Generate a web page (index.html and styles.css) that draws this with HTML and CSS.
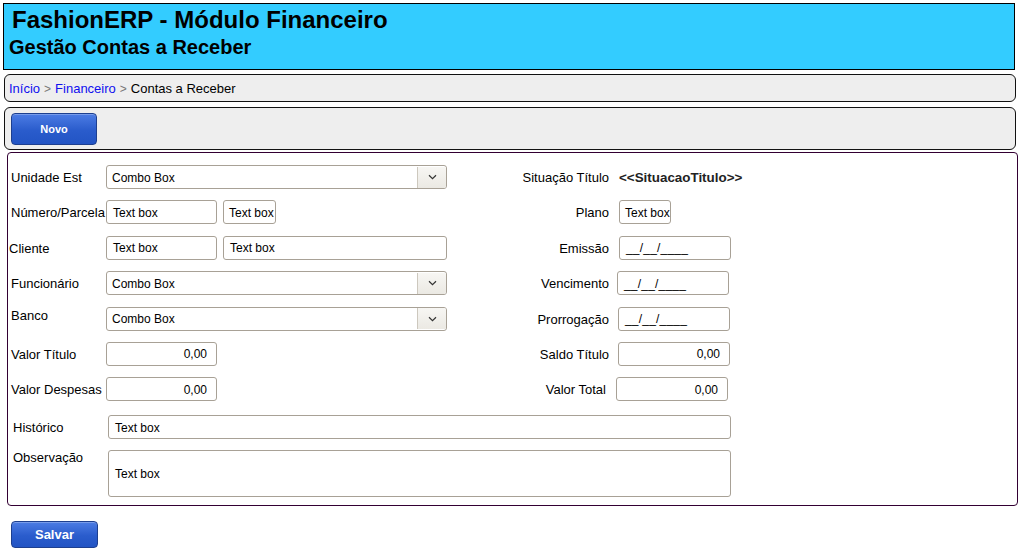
FILE: index.html
```html
<!DOCTYPE html>
<html lang="pt">
<head>
<meta charset="utf-8">
<title>FashionERP - Módulo Financeiro</title>
<link rel="stylesheet" href="styles.css">
</head>
<body>
<header class="header">
  <h1 class="title">FashionERP - Módulo Financeiro</h1>
  <h2 class="subtitle">Gestão Contas a Receber</h2>
</header>

<nav class="crumbs">
  <a href="#">Início</a><span class="sep">&gt;</span><a href="#">Financeiro</a><span class="sep">&gt;</span><span>Contas a Receber</span>
</nav>

<div class="toolbar">
  <button class="btn btn-novo">Novo</button>
</div>

<section class="panel">
  <div class="rows">
    <div class="row">
      <div class="left">
        <span class="lbl">Unidade Est</span>
        <div class="field combo w341"><span class="val">Combo Box</span><span class="arrow"><svg width="9" height="6" viewBox="0 0 9 6"><path d="M1 1.2 L4.5 4.6 L8 1.2" fill="none" stroke="#333" stroke-width="1.2"/></svg></span></div>
      </div>
      <span class="rlbl">Situação Título</span>
      <span class="status">&lt;&lt;SituacaoTitulo&gt;&gt;</span>
    </div>

    <div class="row">
      <div class="left">
        <span class="lbl">Número/Parcela</span>
        <div class="field w111"><span class="val">Text box</span></div>
        <div class="field w53 tight"><span class="val">Text box</span></div>
      </div>
      <span class="rlbl">Plano</span>
      <div class="field w52 tight rf"><span class="val">Text box</span></div>
    </div>

    <div class="row">
      <div class="left">
        <span class="lbl shift">Cliente</span>
        <div class="field w111"><span class="val">Text box</span></div>
        <div class="field w224"><span class="val">Text box</span></div>
      </div>
      <span class="rlbl">Emissão</span>
      <div class="field w112 rf"><span class="val date">__/__/____</span></div>
    </div>

    <div class="row">
      <div class="left">
        <span class="lbl">Funcionário</span>
        <div class="field combo w341"><span class="val">Combo Box</span><span class="arrow"><svg width="9" height="6" viewBox="0 0 9 6"><path d="M1 1.2 L4.5 4.6 L8 1.2" fill="none" stroke="#333" stroke-width="1.2"/></svg></span></div>
      </div>
      <span class="rlbl">Vencimento</span>
      <div class="field w112 rf rf-8"><span class="val date">__/__/____</span></div>
    </div>

    <div class="row">
      <div class="left">
        <span class="lbl up">Banco</span>
        <div class="field combo w341"><span class="val">Combo Box</span><span class="arrow"><svg width="9" height="6" viewBox="0 0 9 6"><path d="M1 1.2 L4.5 4.6 L8 1.2" fill="none" stroke="#333" stroke-width="1.2"/></svg></span></div>
      </div>
      <span class="rlbl">Prorrogação</span>
      <div class="field w112 rf rf-9"><span class="val date">__/__/____</span></div>
    </div>

    <div class="row">
      <div class="left">
        <span class="lbl">Valor Título</span>
        <div class="field w111 num"><span class="val">0,00</span></div>
      </div>
      <span class="rlbl">Saldo Título</span>
      <div class="field w112 rf rf-9 num"><span class="val">0,00</span></div>
    </div>

    <div class="row">
      <div class="left">
        <span class="lbl">Valor Despesas</span>
        <div class="field w111 num"><span class="val">0,00</span></div>
      </div>
      <span class="rlbl rl-short">Valor Total</span>
      <div class="field w112 rf num"><span class="val">0,00</span></div>
    </div>
  </div>

  <div class="notes">
    <div class="row">
      <span class="lbl lbl-wide">Histórico</span>
      <div class="field w623"><span class="val">Text box</span></div>
    </div>
    <div class="row row-area">
      <span class="lbl lbl-wide lbl-top">Observação</span>
      <div class="field area w623"><span class="val">Text box</span></div>
    </div>
  </div>
</section>

<div class="actions">
  <button class="btn btn-salvar">Salvar</button>
</div>
</body>
</html>
```

FILE: styles.css
```css
* { box-sizing: border-box; }

body {
  margin: 0;
  padding: 3px 0 0 0;
  font-family: "Liberation Sans", Arial, sans-serif;
  color: #000;
  background: #fff;
}

.header {
  margin-left: 3px;
  width: 1012px;
  height: 67px;
  background: #33ccff;
  border: 1px solid #000;
  padding: 3px 0 0 4px;
}

.title {
  margin: 0 0 0 4px;
  font-size: 24px;
  line-height: 26px;
  font-weight: bold;
}

.subtitle {
  margin: 3px 0 0 1px;
  font-size: 20px;
  line-height: 22px;
  font-weight: bold;
}

.crumbs {
  margin: 4px 0 0 4px;
  width: 1012px;
  height: 28px;
  background: #eeeeee;
  border: 1px solid #111;
  border-radius: 6px;
  padding: 1px 0 0 4px;
  font-size: 13px;
  line-height: 26px;
  display: flex;
  align-items: center;
}

.crumbs a {
  color: #1010ee;
  text-decoration: none;
}

.crumbs .sep {
  color: #777;
  margin: 0 4px;
  font-size: 12px;
}

.toolbar {
  margin: 5px 0 0 4px;
  width: 1012px;
  height: 43px;
  background: #eeeeee;
  border: 1px solid #111;
  border-radius: 6px;
  padding: 5px 0 0 6px;
}

.btn {
  display: block;
  border: 1px solid #1d3f8f;
  border-radius: 4px;
  background: linear-gradient(#4c7ce4, #2a5ccc 55%, #2254c4);
  color: #fff;
  font-family: "Liberation Sans", Arial, sans-serif;
  font-weight: bold;
  padding: 0;
  box-shadow: inset 0 1px 0 rgba(255,255,255,0.25);
}

.btn-novo {
  width: 86px;
  height: 32px;
  font-size: 11px;
}

.panel {
  margin: 2px 0 0 7px;
  width: 1011px;
  height: 354px;
  border: 1px solid #330033;
  border-radius: 4px;
  padding: 12px 0 0 3px;
}

.rows {
  display: grid;
  grid-auto-rows: 24px;
  row-gap: 11.4px;
}

.row {
  display: flex;
  align-items: center;
  height: 24px;
  font-size: 13px;
}

.left {
  display: flex;
  align-items: center;
  gap: 6px;
  width: 436px;
  height: 24px;
}

.lbl {
  width: 95px;
  flex: none;
  margin-right: -6px;
  white-space: nowrap;
  padding-top: 1px;
}

.lbl.shift { margin-left: -2px; width: 97px; }
.lbl.up { padding-top: 0; padding-bottom: 6px; }

.rlbl {
  width: 162px;
  flex: none;
  text-align: right;
  white-space: nowrap;
  padding-top: 1px;
}

.rl-short { width: 159px; }

.status {
  margin-left: 10px;
  font-weight: bold;
  font-size: 13.4px;
  color: #222;
  padding-top: 1px;
}

.field {
  flex: none;
  height: 24px;
  border: 1px solid #a8a196;
  border-radius: 3px;
  background: #fff;
  display: flex;
  align-items: center;
  font-size: 12px;
  padding: 1px 0 0 6px;
  color: #000;
  white-space: nowrap;
  overflow: hidden;
}

.field.tight { padding-left: 5px; }
.field.num { justify-content: flex-end; padding: 1px 9px 0 0; }

.rf { margin-left: 10px; }
.rf-8 { margin-left: 8px; }
.rf-9 { margin-left: 9px; }

.w52 { width: 52px; }
.w53 { width: 53px; }
.w111 { width: 111px; }
.w112 { width: 112px; }
.w224 { width: 224px; }
.w341 { width: 341px; }
.w623 { width: 623px; }

.combo {
  padding: 1px 0 0 5px;
  justify-content: space-between;
}

.combo .arrow {
  width: 29px;
  height: 100%;
  margin-top: -1px;
  border-left: 1px solid #cdc8be;
  background: linear-gradient(#f7f6f3, #ebe9e3);
  display: flex;
  align-items: center;
  justify-content: center;
}

.date { letter-spacing: 0.2px; }

.notes {
  margin-top: 14px;
  display: flex;
  flex-direction: column;
  gap: 11px;
}

.lbl-wide {
  width: 95px;
  margin-left: 2px;
  margin-right: 0;
}

.row-area {
  height: 47px;
  align-items: flex-start;
}

.lbl-top { padding-top: 0; line-height: 16px; }

.area {
  height: 47px;
}

.actions {
  margin: 15px 0 0 11px;
}

.btn-salvar {
  width: 87px;
  height: 27px;
  font-size: 13px;
}
```
